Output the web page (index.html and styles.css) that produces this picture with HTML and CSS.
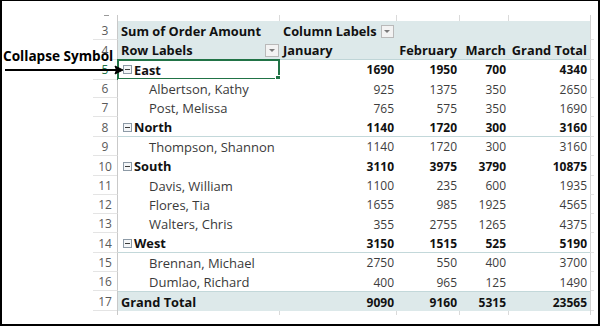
FILE: index.html
```html
<!DOCTYPE html>
<html>
<head>
<meta charset="utf-8">
<link rel="stylesheet" href="styles.css">
</head>
<body>
<div class="frame">
  <div class="sheet">
    <div class="row part-top">
      <div class="rn top"><span class="dash"></span></div>
      <div class="g"></div><div class="g"></div><div class="g"></div><div class="g"></div><div class="g"></div><div class="x"></div>
    </div>

    <div class="row">
      <div class="rn">3</div>
      <div class="c shade b t">Sum of Order Amount</div>
      <div class="c shade b t">Column Labels <span class="fbtn"><i></i></span></div>
      <div class="c shade"></div><div class="c shade"></div><div class="c shade"></div>
      <div class="x"></div>
    </div>

    <div class="row">
      <div class="rn">4</div>
      <div class="c shade b t hb between">Row Labels <span class="fbtn"><i></i></span></div>
      <div class="c shade b t hb">January</div>
      <div class="c shade b t hb r">February</div>
      <div class="c shade b t hb r">March</div>
      <div class="c shade b t hb r">Grand Total</div>
      <div class="x"></div>
    </div>

    <div class="row">
      <div class="rn green">5</div>
      <div class="c b t reg sel"><span class="tog"></span>East</div>
      <div class="c b reg r">1690</div><div class="c b reg r">1950</div><div class="c b reg r">700</div><div class="c b reg r">4340</div>
      <div class="x"></div>
    </div>
    <div class="row">
      <div class="rn">6</div>
      <div class="c name">Albertson, Kathy</div>
      <div class="c r">925</div><div class="c r">1375</div><div class="c r">350</div><div class="c r">2650</div>
      <div class="x"></div>
    </div>
    <div class="row">
      <div class="rn">7</div>
      <div class="c name">Post, Melissa</div>
      <div class="c r">765</div><div class="c r">575</div><div class="c r">350</div><div class="c r">1690</div>
      <div class="x"></div>
    </div>

    <div class="row">
      <div class="rn">8</div>
      <div class="c b t reg"><span class="tog"></span>North</div>
      <div class="c b reg r">1140</div><div class="c b reg r">1720</div><div class="c b reg r">300</div><div class="c b reg r">3160</div>
      <div class="x"></div>
    </div>
    <div class="row">
      <div class="rn">9</div>
      <div class="c name">Thompson, Shannon</div>
      <div class="c r">1140</div><div class="c r">1720</div><div class="c r">300</div><div class="c r">3160</div>
      <div class="x"></div>
    </div>

    <div class="row">
      <div class="rn">10</div>
      <div class="c b t reg"><span class="tog"></span>South</div>
      <div class="c b reg r">3110</div><div class="c b reg r">3975</div><div class="c b reg r">3790</div><div class="c b reg r">10875</div>
      <div class="x"></div>
    </div>
    <div class="row">
      <div class="rn">11</div>
      <div class="c name">Davis, William</div>
      <div class="c r">1100</div><div class="c r">235</div><div class="c r">600</div><div class="c r">1935</div>
      <div class="x"></div>
    </div>
    <div class="row">
      <div class="rn">12</div>
      <div class="c name">Flores, Tia</div>
      <div class="c r">1655</div><div class="c r">985</div><div class="c r">1925</div><div class="c r">4565</div>
      <div class="x"></div>
    </div>
    <div class="row">
      <div class="rn">13</div>
      <div class="c name">Walters, Chris</div>
      <div class="c r">355</div><div class="c r">2755</div><div class="c r">1265</div><div class="c r">4375</div>
      <div class="x"></div>
    </div>

    <div class="row">
      <div class="rn">14</div>
      <div class="c b t reg"><span class="tog"></span>West</div>
      <div class="c b reg r">3150</div><div class="c b reg r">1515</div><div class="c b reg r">525</div><div class="c b reg r">5190</div>
      <div class="x"></div>
    </div>
    <div class="row">
      <div class="rn">15</div>
      <div class="c name">Brennan, Michael</div>
      <div class="c r">2750</div><div class="c r">550</div><div class="c r">400</div><div class="c r">3700</div>
      <div class="x"></div>
    </div>
    <div class="row">
      <div class="rn">16</div>
      <div class="c name">Dumlao, Richard</div>
      <div class="c r">400</div><div class="c r">965</div><div class="c r">125</div><div class="c r">1490</div>
      <div class="x"></div>
    </div>

    <div class="row">
      <div class="rn">17</div>
      <div class="c shade b t gt">Grand Total</div>
      <div class="c shade b gt r">9090</div><div class="c shade b gt r">9160</div><div class="c shade b gt r">5315</div><div class="c shade b gt r">23565</div>
      <div class="x"></div>
    </div>

    <div class="row part-bottom">
      <div class="rn"></div>
      <div class="g"></div><div class="g"></div><div class="g"></div><div class="g"></div><div class="g"></div><div class="x"></div>
    </div>
  </div>

  <div class="callout">Collapse Symbol</div>
  <svg class="arrow" width="120" height="14" viewBox="0 0 120 14">
    <line x1="0" y1="7" x2="112" y2="7" stroke="#000" stroke-width="2"/>
    <polygon points="118,7 110,3 111.5,7 110,11" fill="#000" stroke="#000" stroke-width="1" stroke-linejoin="round"/>
  </svg>
</div>
</body>
</html>
```

FILE: styles.css
```css
html, body {
  margin: 0;
  padding: 0;
  background: #fff;
}

.frame {
  position: relative;
  width: 600px;
  height: 326px;
  box-sizing: border-box;
  border: 2px solid #000;
  border-top-width: 1px;
  background: #fff;
  padding: 14px 0 0 91px;
  font-family: "Open Sans", "Liberation Sans", sans-serif;
  font-size: 12px;
  color: #3d3d3d;
}

.sheet {
  display: flex;
  flex-direction: column;
}

.row {
  display: grid;
  grid-template-columns: 25px 162px 117px 63px 49px 81px 4px;
  height: 19.3px;
}

.row.part-top { height: 6px; }
.row.part-bottom { height: 5px; }

.rn {
  box-sizing: border-box;
  border-right: 1px solid #c9c9c9;
  border-bottom: 1px solid #e4e4e4;
  display: flex;
  align-items: center;
  justify-content: center;
  color: #5a5a5a;
  font-size: 12px;
  padding-top: 1px;
}

.part-top .rn, .part-bottom .rn { border-bottom: 0; }

.rn.top {
  align-items: flex-start;
  padding-top: 0;
}
.dash {
  display: block;
  width: 5px;
  height: 1px;
  margin-left: 2px;
  background: #9a9a9a;
}

.rn.green { color: #217346; }

.g {
  box-sizing: border-box;
  border-right: 1px solid #dadada;
}
.g:nth-child(6) { border-right: 0; }

.x {
  box-sizing: border-box;
  border-left: 1px solid #d3d3d3;
  border-bottom: 1px solid #e2e2e2;
}
.part-top .x, .part-bottom .x { border-bottom: 0; }

.c {
  box-sizing: border-box;
  display: flex;
  align-items: center;
  padding: 1px 3px 0 3px;
  white-space: nowrap;
  background: #fff;
  position: relative;
}

.c.r { justify-content: flex-end; padding-right: 3px; }
.c.b { font-weight: 700; color: #111; }
.c.t { font-size: 12.8px; }
.c.shade { background: #dde9ea; }
.c.hb { border-bottom: 1px solid #bfd5d7; }
.c.reg { border-bottom: 1px solid #c3d8da; }
.c.gt { border-top: 1px solid #c3d8da; }
.c.name { padding-left: 31px; color: #3a3a3a; font-size: 13px; }

.c.between { justify-content: space-between; padding-right: 1px; }

.tog {
  display: inline-block;
  box-sizing: border-box;
  width: 9px;
  height: 9px;
  border: 1px solid #8d9aa6;
  background: #f4f6f8;
  margin: 0 2px 0 2px;
  position: relative;
}
.tog::after {
  content: "";
  position: absolute;
  left: 1px;
  right: 1px;
  top: 3px;
  height: 1px;
  background: #3c3c3c;
}

.fbtn {
  display: inline-flex;
  align-items: center;
  justify-content: center;
  box-sizing: border-box;
  width: 14px;
  height: 13px;
  border: 1px solid #b9b9b9;
  background: #f3f3f3;
  margin-left: 4px;
}
.fbtn i {
  width: 0;
  height: 0;
  border-left: 3px solid transparent;
  border-right: 3px solid transparent;
  border-top: 3px solid #7a7a7a;
}

.sel::before {
  content: "";
  position: absolute;
  left: -1px;
  top: -1px;
  right: 0;
  bottom: -1px;
  border: 2px solid #217346;
}
.sel::after {
  content: "";
  position: absolute;
  right: -2px;
  bottom: -3px;
  width: 5px;
  height: 5px;
  background: #217346;
  border: 1px solid #fff;
}

.callout {
  position: absolute;
  left: 1px;
  top: 45px;
  font-family: "Open Sans", "Liberation Sans", sans-serif;
  font-weight: 700;
  font-size: 13.6px;
  color: #000;
  white-space: nowrap;
}

.arrow {
  position: absolute;
  left: 3px;
  top: 62px;
}
```
